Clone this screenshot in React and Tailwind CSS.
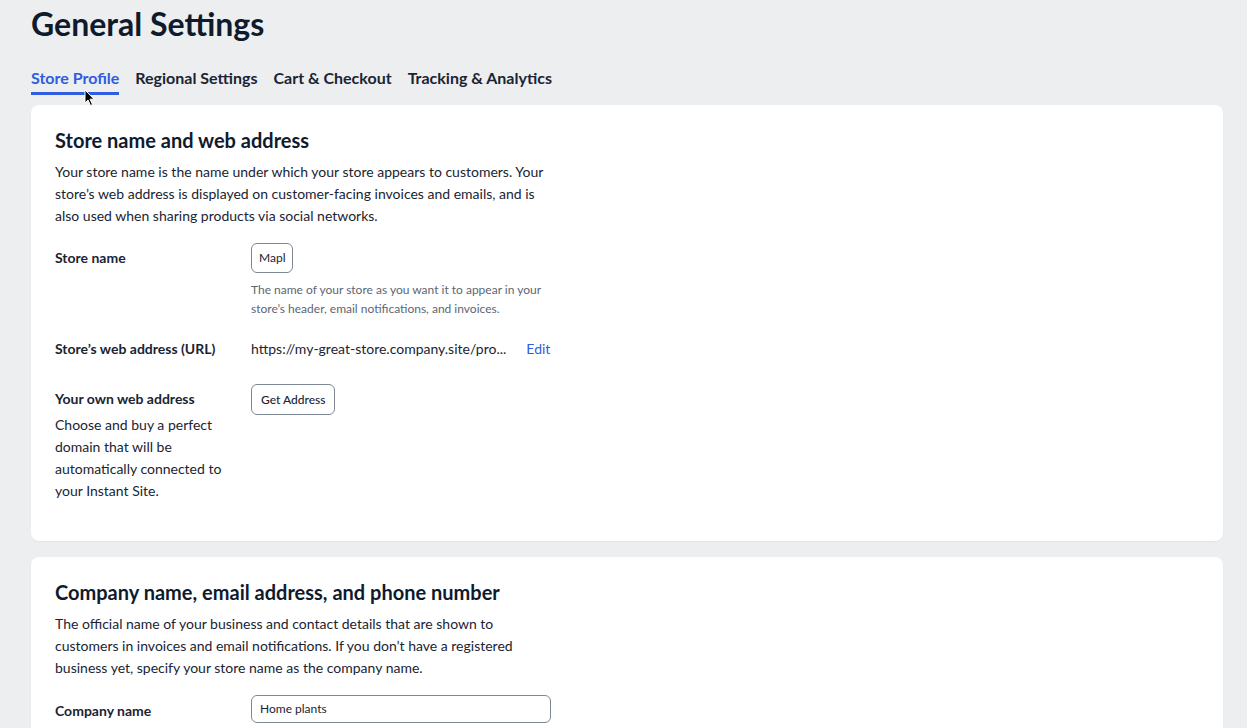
import React from "react";

const tabs = ["Store Profile", "Regional Settings", "Cart & Checkout", "Tracking & Analytics"];

// Label column on the left, control on the right
const Row = ({ label, children, className = "" }) => (
  <div className={`flex ${className}`}>
    <div className="w-[196px] shrink-0 pr-4">{label}</div>
    <div className="flex-1">{children}</div>
  </div>
);

const Card = ({ title, text, children }) => (
  <section className="bg-white rounded-lg shadow-[0_1px_2px_rgba(0,0,0,0.04)] px-6 pt-5 pb-[39px]">
    <h2 className="text-[20px] leading-[30px] font-bold text-[#0f1b2d]">{title}</h2>
    <p className="mt-[6px] w-[500px] text-[14px] leading-[22px] text-[#1a2433]">{text}</p>
    {children}
  </section>
);

const Cursor = () => (
  <svg width="12" height="18" viewBox="0 0 12 18" className="absolute left-[84px] top-[89px]">
    <path d="M1 1 L1 14 L4 11 L6.5 16.5 L8.5 15.5 L6 10.2 L10 10.2 Z" fill="#000" stroke="#fff" strokeWidth="1" />
  </svg>
);

export default function App() {
  return (
    <div className="relative min-h-[728px] bg-[#edeef0] pl-[31px] pr-[24px] font-['Lato','Open_Sans',sans-serif] text-[#1a2433]">
      <h1 className="pt-[4px] text-[32px] leading-[40px] font-bold text-[#0f1b2d]">General Settings</h1>

      <nav className="mt-[24px] flex gap-4">
        {tabs.map((t, i) => (
          <div
            key={t}
            className={`pb-[4px] text-[16px] leading-[20px] font-bold border-b-[3px] ${
              i === 0 ? "text-[#2f5ce0] border-[#2f5ce0]" : "text-[#1a2433] border-transparent"
            }`}
          >
            {t}
          </div>
        ))}
      </nav>
      <Cursor />

      <div className="mt-[10px] flex flex-col gap-4">
        <Card
          title="Store name and web address"
          text="Your store name is the name under which your store appears to customers. Your store’s web address is displayed on customer-facing invoices and emails, and is also used when sharing products via social networks."
        >
          <Row
            className="mt-[16px]"
            label={<div className="pt-[7px] text-[14px] leading-[16px] font-bold">Store name</div>}
          >
            <div className="inline-block rounded-md border border-[#7e8894] px-[7px] py-[6px] text-[12px] leading-[16px]">
              Mapl
            </div>
            <p className="mt-[7px] w-[300px] text-[12px] leading-[19px] text-[#5d6673]">
              The name of your store as you want it to appear in your store’s header, email notifications, and invoices.
            </p>
          </Row>

          <Row
            className="mt-[21px]"
            label={<div className="text-[14px] leading-[20px] font-bold">Store’s web address (URL)</div>}
          >
            <div className="flex gap-5 text-[14px] leading-[20px]">
              <span>https://my-great-store.company.site/pro...</span>
              <span className="text-[#2f5ce0]">Edit</span>
            </div>
          </Row>

          <Row
            className="mt-[25px]"
            label={
              <div className="text-[14px] leading-[22px]">
                <div className="pt-[4px] font-bold">Your own web address</div>
                <div className="mt-[4px]">
                  Choose and buy a perfect domain that will be automatically connected to your Instant Site.
                </div>
              </div>
            }
          >
            <div className="inline-block rounded-md border border-[#7e8894] px-[9px] py-[7px] text-[12px] leading-[15px] font-medium">
              Get Address
            </div>
          </Row>
        </Card>

        <Card
          title="Company name, email address, and phone number"
          text="The official name of your business and contact details that are shown to customers in invoices and email notifications. If you don’t have a registered business yet, specify your store name as the company name."
        >
          <Row
            className="mt-[16px]"
            label={<div className="pt-[8px] text-[14px] leading-[16px] font-bold">Company name</div>}
          >
            <div className="w-[300px] rounded-md border border-[#7e8894] px-[8px] py-[5px] text-[12px] leading-[16px]">
              Home plants
            </div>
          </Row>
        </Card>
      </div>
    </div>
  );
}
